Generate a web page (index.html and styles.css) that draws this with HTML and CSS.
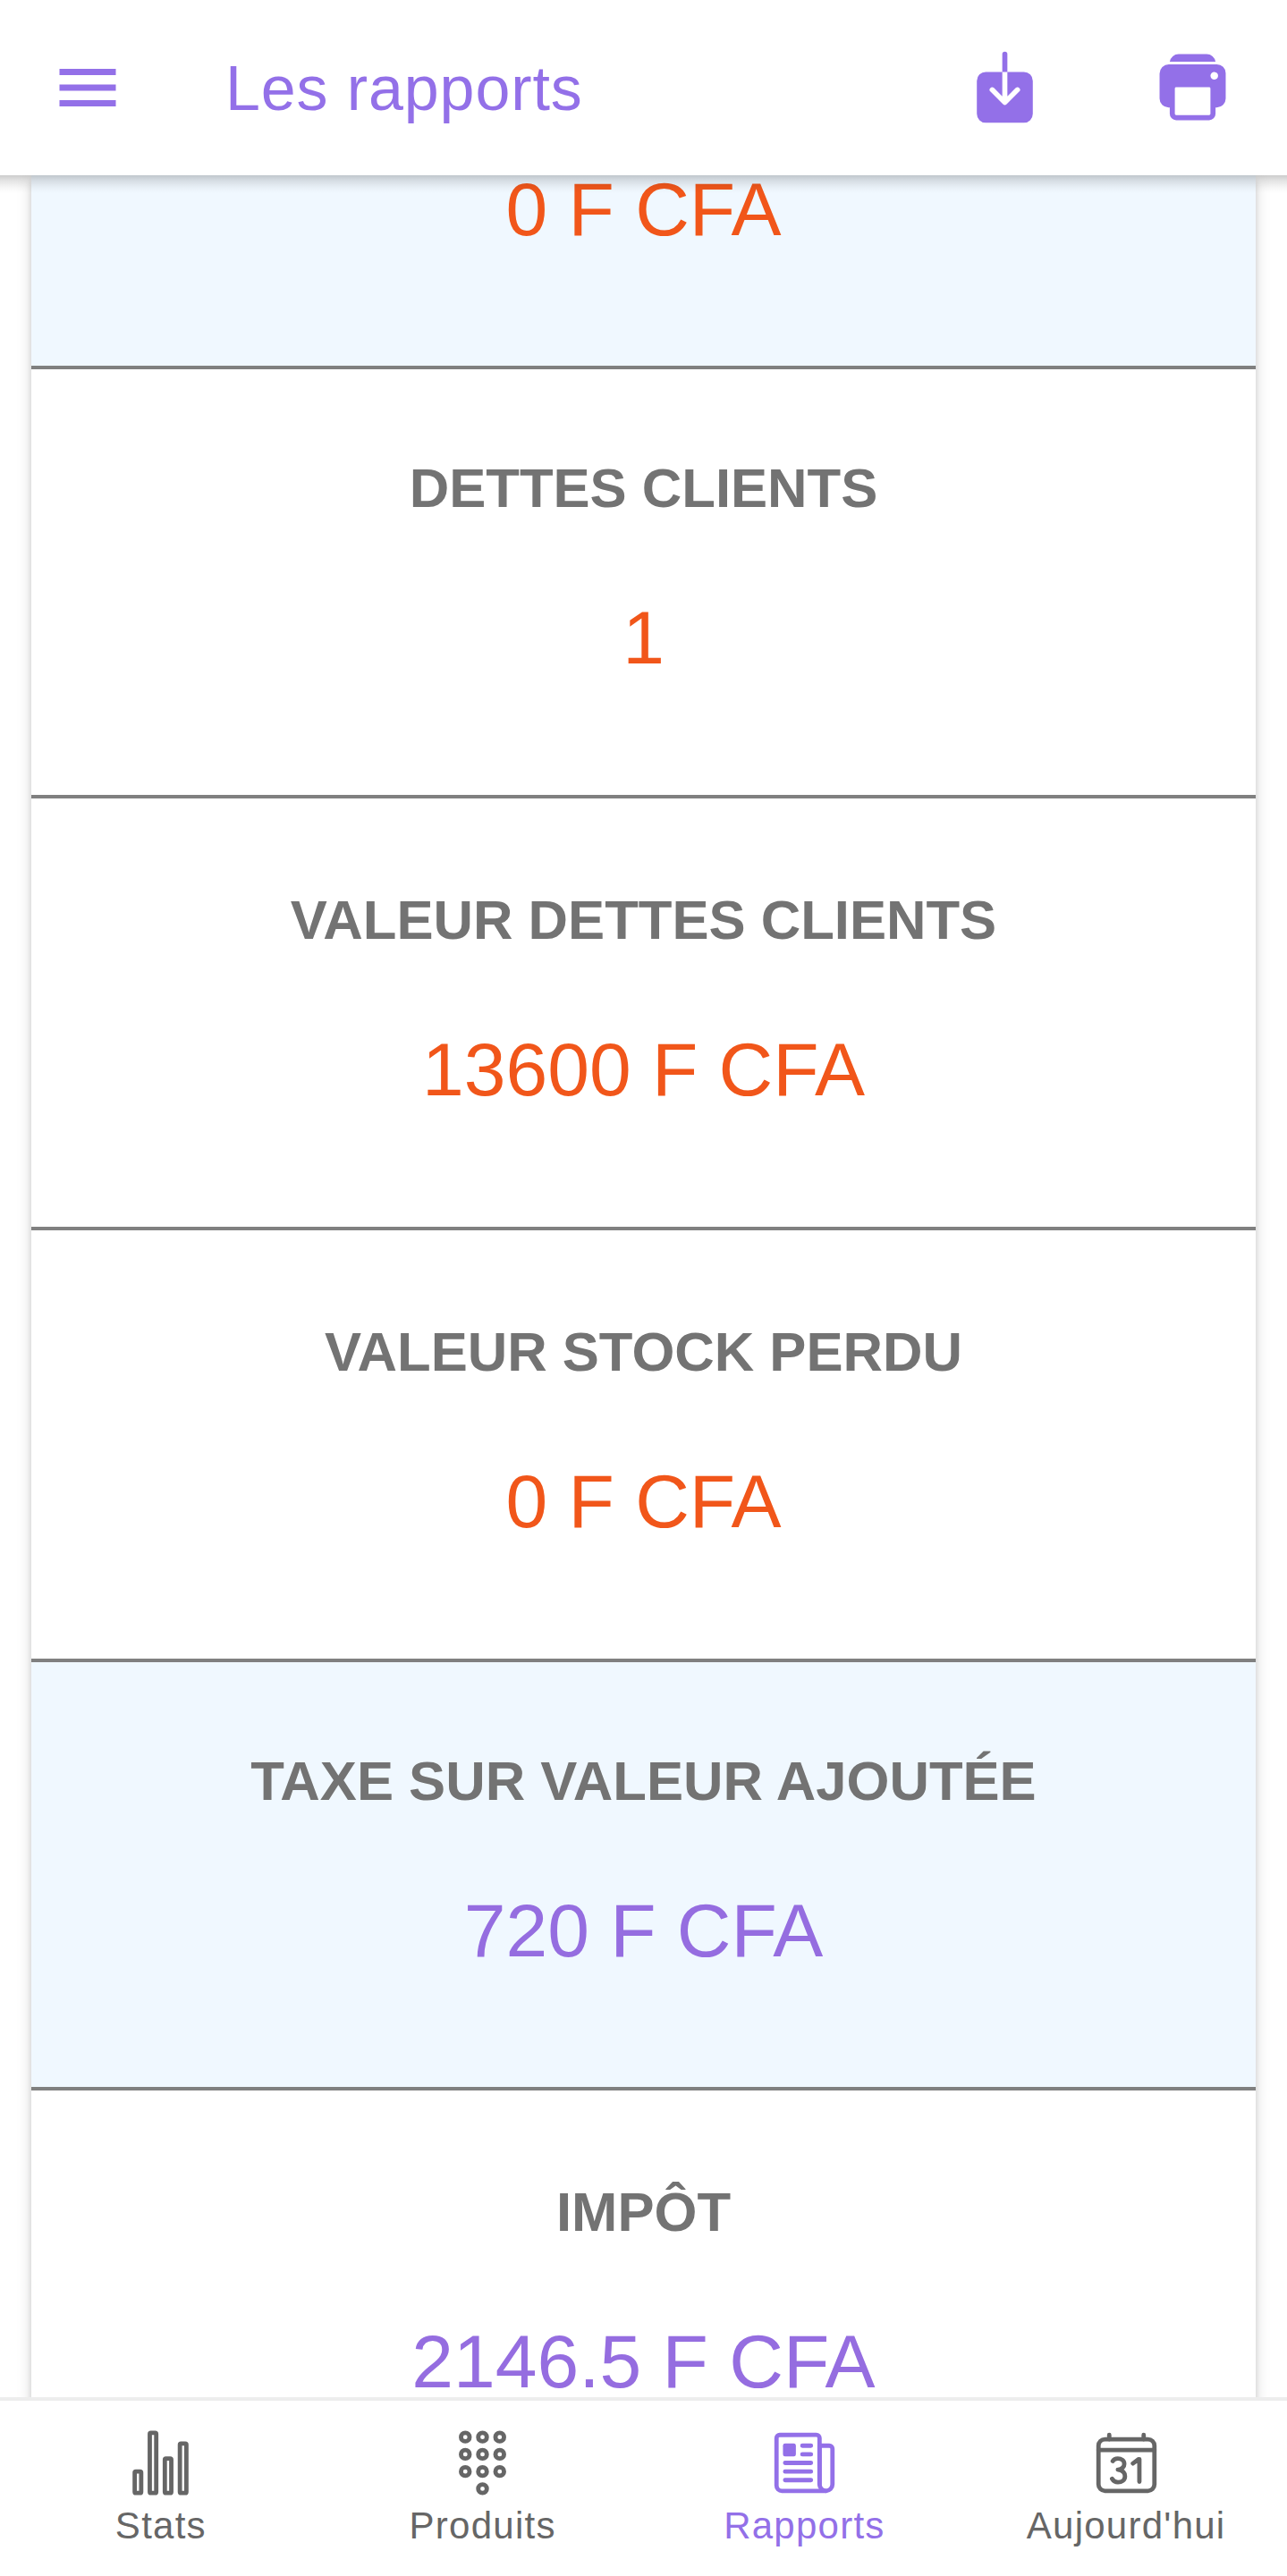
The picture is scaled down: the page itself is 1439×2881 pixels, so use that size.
FILE: index.html
```html
<!DOCTYPE html>
<html lang="fr">

<head>
    <meta charset="UTF-8">
    <meta name="viewport" content="width=device-width, initial-scale=1.0">
    <title>Les rapports</title>
    <link rel="stylesheet" href="styles.css">
</head>

<body>
    <header class="toolbar">
        <button class="btn-menu" aria-label="Menu">
            <svg viewBox="0 0 512 512"><path d="M64 384h384v-42.67H64zm0-106.67h384v-42.66H64zM64 128v42.67h384V128z"/></svg>
        </button>
        <h1>Les rapports</h1>
        <div class="actions">
            <button aria-label="Télécharger">
                <svg viewBox="0 0 512 512"><path d="M376 160H272v153.37l52.69-52.68a16 16 0 0122.62 22.62l-80 80a16 16 0 01-22.62 0l-80-80a16 16 0 0122.62-22.62L240 313.37V160H136a56.06 56.06 0 00-56 56v208a56.06 56.06 0 0056 56h240a56.06 56.06 0 0056-56V216a56.06 56.06 0 00-56-56zM272 48a16 16 0 00-32 0v112h32z"/></svg>
            </button>
            <button aria-label="Imprimer">
                <svg viewBox="0 0 512 512"><path d="M408 112H106a58 58 0 00-58 58v158a56 56 0 0056 56h8v39.68A40.32 40.32 0 00152.32 464h207.36A40.32 40.32 0 00400 423.68V384h8a56 56 0 0056-56V168a56 56 0 00-56-56zm-40 311.68a8.35 8.35 0 01-8.32 8.32H152.32a8.35 8.35 0 01-8.32-8.32V264.32a8.35 8.35 0 018.32-8.32h207.36a8.35 8.35 0 018.32 8.32zM394 207.92a24 24 0 1122-22 24 24 0 01-22 22z"/><path d="M344 48H168a56 56 0 00-56 48h288a56 56 0 00-56-48z"/></svg>
            </button>
        </div>
    </header>

    <main class="content">
        <section class="card">
            <div class="row row-first bleu">
                <p class="valeur rouge">0 F CFA</p>
            </div>
            <div class="row row-court">
                <h2>DETTES CLIENTS</h2>
                <p class="valeur rouge">1</p>
            </div>
            <div class="row">
                <h2>VALEUR DETTES CLIENTS</h2>
                <p class="valeur rouge">13600 F CFA</p>
            </div>
            <div class="row">
                <h2>VALEUR STOCK PERDU</h2>
                <p class="valeur rouge">0 F CFA</p>
            </div>
            <div class="row row-court bleu">
                <h2>TAXE SUR VALEUR AJOUTÉE</h2>
                <p class="valeur violet">720 F CFA</p>
            </div>
            <div class="row">
                <h2>IMPÔT</h2>
                <p class="valeur violet">2146.5 F CFA</p>
            </div>
        </section>
    </main>

    <nav class="tabs">
        <a class="tab">
            <svg class="outline" viewBox="0 0 512 512">
                <rect x="64" y="320" width="48" height="160" rx="8"/>
                <rect x="288" y="224" width="48" height="256" rx="8"/>
                <rect x="400" y="112" width="48" height="368" rx="8"/>
                <rect x="176" y="32" width="48" height="448" rx="8"/>
            </svg>
            <span>Stats</span>
        </a>
        <a class="tab">
            <svg class="outline" viewBox="0 0 512 512">
                <circle cx="128" cy="64" r="32"/><circle cx="256" cy="64" r="32"/><circle cx="384" cy="64" r="32"/>
                <circle cx="128" cy="192" r="32"/><circle cx="256" cy="192" r="32"/><circle cx="384" cy="192" r="32"/>
                <circle cx="128" cy="320" r="32"/><circle cx="256" cy="320" r="32"/><circle cx="384" cy="320" r="32"/>
                <circle cx="256" cy="448" r="32"/>
            </svg>
            <span>Produits</span>
        </a>
        <a class="tab active">
            <svg class="outline" viewBox="0 0 512 512">
                <path d="M368 415.86V72a24.07 24.07 0 00-24-24H72a24.07 24.07 0 00-24 24v352a40.12 40.12 0 0040 40h328"/>
                <path d="M416 464a48 48 0 01-48-48V128h72a24 24 0 0124 24v264a48 48 0 01-48 48z"/>
                <path d="M240 128h64M240 192h64M112 256h192M112 320h192M112 384h192"/>
                <path class="plein" d="M176 208h-64a16 16 0 01-16-16v-64a16 16 0 0116-16h64a16 16 0 0116 16v64a16 16 0 01-16 16z"/>
            </svg>
            <span>Rapports</span>
        </a>
        <a class="tab">
            <svg class="outline" viewBox="0 0 512 512">
                <rect x="48" y="80" width="416" height="384" rx="48"/>
                <path d="M128 48v32M384 48v32M464 160H48"/>
                <path d="M304 260l43.42-32H352v168M191.87 306.63c9.11 0 25.79-4.28 36.72-15.47a37.9 37.9 0 0011.13-27.26c0-26.12-22.59-39.9-47.89-39.9-21.4 0-33.52 11.61-37.85 18.93M149 374.16c4.88 8.27 19.71 25.84 43.88 25.84 28.59 0 52.12-15.94 52.12-43.82 0-12.62-3.66-24-11.58-32.07-12.36-12.64-31.25-17.48-41.55-17.48"/>
            </svg>
            <span>Aujourd'hui</span>
        </a>
    </nav>
</body>

</html>
```
FILE: styles.css
```css
* {
    box-sizing: border-box;
}

body {
    font-family: "Liberation Sans", Arial, sans-serif;
    display: flex;
    flex-direction: column;
    height: 100vh;
    margin: 0;
    overflow: hidden;
    background: white;
}

h1, h2, p {
    margin: 0;
}

svg {
    display: block;
    fill: currentColor;
}

button {
    padding: 0;
    border: none;
    background: none;
    color: inherit;
    cursor: pointer;
}

.toolbar {
    position: relative;
    z-index: 2;
    display: flex;
    flex: none;
    align-items: center;
    height: 196px;
    padding: 0 60px 0 56px;
    background: white;
    color: #9370e8;
}

.toolbar::after {
    content: "";
    position: absolute;
    left: 0;
    right: 0;
    top: 100%;
    height: 20px;
    background: linear-gradient(rgba(0, 0, 0, 0.2), rgba(0, 0, 0, 0.11) 30%, rgba(0, 0, 0, 0.03) 70%, rgba(0, 0, 0, 0));
}

.btn-menu svg {
    width: 84px;
    height: 84px;
}

.toolbar h1 {
    flex: 1;
    margin-left: 112px;
    padding-top: 2px;
    font-size: 70px;
    font-weight: normal;
    line-height: 80px;
    letter-spacing: 0.0125em;
}

.actions {
    display: flex;
    gap: 119px;
    margin-bottom: 1px;
}

.actions svg {
    width: 91px;
    height: 91px;
}

.content {
    flex: 1;
    min-height: 0;
    padding: 0 35px;
    overflow: hidden;
}

.card {
    background: white;
    box-shadow: 0 10px 4px -7px rgba(0, 0, 0, 0.2), 0 7px 7px 0 rgba(0, 0, 0, 0.14), 0 3px 17px 0 rgba(0, 0, 0, 0.12);
    text-align: center;
}

.row {
    height: 483px;
    padding-top: 101px;
    border-bottom: 4px solid gray;
}

.row-court {
    height: 480px;
    padding-top: 98px;
}

.row-court.bleu {
    height: 479px;
}

.row-first {
    height: 217px;
    padding-top: 0;
}

/* la première ligne est déjà défilée sous la barre */
.row-first .valeur {
    height: 86px;
    line-height: 76px;
}

.bleu {
    background: aliceblue;
}

.row h2 {
    margin-bottom: 85px;
    color: #737373;
    font-size: 61.6px;
    line-height: 69px;
}

.valeur {
    font-size: 84px;
    line-height: 96px;
}

.rouge {
    color: #f1561a;
}

.violet {
    color: #956de0;
}

.tabs {
    position: relative;
    z-index: 2;
    display: flex;
    flex: none;
    height: 200px;
    border-top: 4px solid #ededed;
    background: white;
}

.tab {
    display: flex;
    flex: 1;
    flex-direction: column;
    align-items: center;
    padding-top: 31px;
    color: #666;
    font-size: 42px;
    letter-spacing: 0.03em;
}

.tab svg {
    width: 77px;
    height: 77px;
}

.tab span {
    margin-top: 8px;
    line-height: 47px;
}

.active {
    color: #9370e8;
}

.outline {
    fill: none;
    stroke: currentColor;
    stroke-width: 32px;
    stroke-linecap: round;
    stroke-linejoin: round;
}

.plein {
    fill: currentColor;
    stroke: none;
}
```
